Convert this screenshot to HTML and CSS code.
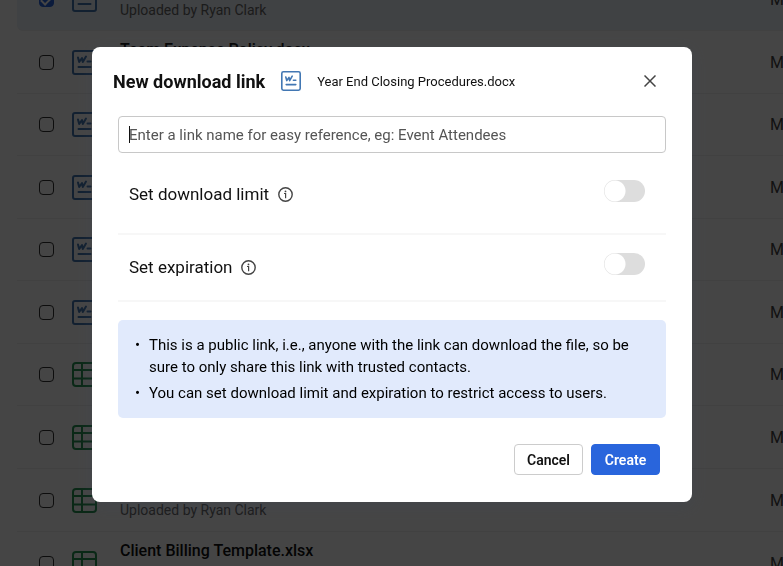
FILE: index.html
```html
<!DOCTYPE html>
<html lang="en">
<head>
    <meta charset="UTF-8">
    <meta name="viewport" content="width=device-width, initial-scale=1.0">
    <title>New download link</title>
    <link rel="stylesheet" href="styles.css">
</head>
<body>
    <svg width="0" height="0" class="sprite" aria-hidden="true">
        <symbol id="icon-doc" viewBox="0 0 25 25">
            <rect x="1" y="1" width="23" height="23" rx="2" fill="none" stroke="currentColor" stroke-width="2"/>
            <path d="M6 7.500L7.200 12L10 8L10.800 12L14 6.500M15.500 11.500H18.500M6.500 17H18.500" fill="none" stroke="currentColor" stroke-width="2" stroke-linecap="round" stroke-linejoin="round"/>
        </symbol>
        <symbol id="icon-sheet" viewBox="0 0 25 25">
            <rect x="1" y="1" width="23" height="23" rx="3" fill="none" stroke="currentColor" stroke-width="2"/>
            <path d="M1 8H24M1 16.500H24M10 1V24" fill="none" stroke="currentColor" stroke-width="2"/>
        </symbol>
        <symbol id="icon-info" viewBox="0 0 15 15">
            <circle cx="7.500" cy="7.500" r="6.700" fill="none" stroke="currentColor" stroke-width="1.400"/>
            <path d="M6 6.500H7.600V11.200" fill="none" stroke="currentColor" stroke-width="1.200"/>
            <circle cx="7.500" cy="4.400" r="0.900" fill="currentColor"/>
        </symbol>
    </svg>

    <main class="files">
        <div class="file selected">
            <input type="checkbox" aria-label="Select file" checked>
            <svg class="file-icon doc"><use href="#icon-doc"/></svg>
            <div class="file-text">
                <div class="file-name">Year End Closing Procedures.docx</div>
                <div class="file-meta">Uploaded by Ryan Clark</div>
            </div>
            <span class="owner">Me</span>
        </div>
        <div class="file">
            <input type="checkbox" aria-label="Select file">
            <svg class="file-icon doc"><use href="#icon-doc"/></svg>
            <div class="file-text">
                <div class="file-name">Team Expense Policy.docx</div>
            </div>
            <span class="owner">Me</span>
        </div>
        <div class="file">
            <input type="checkbox" aria-label="Select file">
            <svg class="file-icon doc"><use href="#icon-doc"/></svg>
            <div class="file-text"></div>
            <span class="owner">Me</span>
        </div>
        <div class="file">
            <input type="checkbox" aria-label="Select file">
            <svg class="file-icon doc"><use href="#icon-doc"/></svg>
            <div class="file-text"></div>
            <span class="owner">Me</span>
        </div>
        <div class="file">
            <input type="checkbox" aria-label="Select file">
            <svg class="file-icon doc"><use href="#icon-doc"/></svg>
            <div class="file-text"></div>
            <span class="owner">Me</span>
        </div>
        <div class="file">
            <input type="checkbox" aria-label="Select file">
            <svg class="file-icon doc"><use href="#icon-doc"/></svg>
            <div class="file-text"></div>
            <span class="owner">Me</span>
        </div>
        <div class="file">
            <input type="checkbox" aria-label="Select file">
            <svg class="file-icon sheet"><use href="#icon-sheet"/></svg>
            <div class="file-text"></div>
            <span class="owner">Me</span>
        </div>
        <div class="file">
            <input type="checkbox" aria-label="Select file">
            <svg class="file-icon sheet"><use href="#icon-sheet"/></svg>
            <div class="file-text"></div>
            <span class="owner">Me</span>
        </div>
        <div class="file">
            <input type="checkbox" aria-label="Select file">
            <svg class="file-icon sheet"><use href="#icon-sheet"/></svg>
            <div class="file-text">
                <div class="file-name">&nbsp;</div>
                <div class="file-meta">Uploaded by Ryan Clark</div>
            </div>
            <span class="owner">Me</span>
        </div>
        <div class="file">
            <input type="checkbox" aria-label="Select file">
            <svg class="file-icon sheet"><use href="#icon-sheet"/></svg>
            <div class="file-text">
                <div class="file-name">Client Billing Template.xlsx</div>
            </div>
            <span class="owner">Me</span>
        </div>
    </main>

    <div class="overlay">
        <form class="dialog" role="dialog" aria-labelledby="dialogTitle">
            <header class="dialog-header">
                <h1 id="dialogTitle">New download link</h1>
                <svg class="header-icon"><use href="#icon-doc"/></svg>
                <span class="header-file">Year End Closing Procedures.docx</span>
                <button type="button" class="close" aria-label="Close">
                    <svg viewBox="0 0 12 12"><path d="M0.500 0.500L11.500 11.500M11.500 0.500L0.500 11.500" fill="none" stroke="currentColor" stroke-width="1.500"/></svg>
                </button>
            </header>

            <div class="dialog-body">
                <div class="field">
                    <input type="text" class="link-name" aria-label="Link name" placeholder="Enter a link name for easy reference, eg: Event Attendees" autofocus>
                    <span class="caret"></span>
                </div>

                <div class="option limit">
                    <label for="limit">Set download limit</label>
                    <svg class="info"><use href="#icon-info"/></svg>
                    <input type="checkbox" class="switch" id="limit">
                </div>
                <div class="option">
                    <label for="expiration">Set expiration</label>
                    <svg class="info"><use href="#icon-info"/></svg>
                    <input type="checkbox" class="switch" id="expiration">
                </div>

                <ul class="note">
                    <li>This is a public link, i.e., anyone with the link can download the file, so be sure to only share this link with trusted contacts.</li>
                    <li>You can set download limit and expiration to restrict access to users.</li>
                </ul>
            </div>

            <footer class="dialog-footer">
                <button type="button" class="btn">Cancel</button>
                <button type="submit" class="btn primary">Create</button>
            </footer>
        </form>
    </div>
</body>
</html>
```
FILE: styles.css
```css
* {
    box-sizing: border-box;
}

body {
    margin: 0;
    height: 100vh;
    overflow: hidden;
    font-family: Roboto, "Liberation Sans", sans-serif;
    font-size: 14px;
    color: #111;
    background-color: #fff;
}

button,
input {
    font-family: inherit;
}

.sprite {
    position: absolute;
}

/* file list, scrolled part of the way down */
.files {
    margin: -31px 0 0 17px;
}

.file {
    display: flex;
    align-items: center;
    height: 63px;
    padding-left: 22px;
    border-bottom: 1px solid #eee;
}

.file:nth-child(odd) {
    height: 62px;
}

.file:nth-child(9) {
    height: 63px;
}

.file.selected {
    background-color: #edf2fa;
    border-radius: 6px 0 0 6px;
}

.file input {
    flex: none;
    appearance: none;
    width: 15px;
    height: 15px;
    margin: 0 18px 0 0;
    border: 1px solid #333;
    border-radius: 4px;
}

.file input:checked {
    border-color: #2965dc;
    background-color: #2965dc;
}

.file input:checked::after {
    content: "";
    display: block;
    width: 5px;
    height: 9px;
    margin: 1px auto 0;
    border: solid #fff;
    border-width: 0 2px 2px 0;
    transform: rotate(45deg);
}

.file-icon {
    flex: none;
    width: 25px;
    height: 25px;
}

.doc {
    color: #4277b3;
}

.sheet {
    color: #269454;
}

.file-text {
    flex: 1;
    align-self: flex-start;
    padding: 8px 0 0 23px;
}

.file-name {
    font-size: 16px;
    line-height: 22px;
    font-weight: 500;
}

.file-meta {
    line-height: 22px;
    color: #666;
}

.owner {
    flex: none;
    width: 13px;
    font-size: 16px;
    color: #444;
}

.overlay {
    position: fixed;
    inset: 0;
    display: flex;
    justify-content: center;
    align-items: flex-start;
    padding: 47px 91px 0 92px;
    background-color: rgba(0, 0, 0, 0.73);
}

.dialog {
    width: 100%;
    max-width: 600px;
    padding: 20px 26px 27px;
    border-radius: 8px;
    background-color: #fff;
    box-shadow: 0 4px 16px rgba(60, 70, 85, 0.3);
}

.dialog-header {
    display: flex;
    align-items: center;
    height: 28px;
    margin: 0 10px 21px -5px;
}

.dialog-header h1 {
    margin: 0 16px 0 0;
    font-size: 18px;
    font-weight: 700;
}

.header-icon {
    width: 20px;
    height: 20px;
    margin-right: 16px;
    color: #4277b3;
}

.header-file {
    font-size: 13px;
}

.close {
    display: flex;
    margin-left: auto;
    padding: 0;
    border: none;
    background: none;
    color: #444;
    cursor: pointer;
}

.close svg {
    width: 12px;
    height: 12px;
}

.field {
    position: relative;
}

.link-name {
    display: block;
    width: 100%;
    height: 37px;
    padding: 0 10px;
    border: 1px solid #c8c8c8;
    border-radius: 4px;
    outline: none;
    font-size: 15px;
    color: #111;
    caret-color: transparent;
}

.link-name::placeholder {
    color: #555;
    opacity: 1;
}

.caret {
    position: absolute;
    left: 11px;
    top: 10px;
    width: 1px;
    height: 17px;
    background-color: #111;
}

.option {
    display: flex;
    align-items: center;
    padding: 18px 21px 19px 11px;
    border-bottom: 2px solid #f7f7f7;
}

.option.limit {
    padding: 27px 21px 25px 11px;
}

.option label {
    font-size: 17px;
    line-height: 24px;
}

.info {
    width: 15px;
    height: 15px;
    margin-left: 9px;
    color: #444;
}

.switch {
    appearance: none;
    width: 41px;
    height: 22px;
    margin: 0 0 6px auto;
    border-radius: 11px;
    background: radial-gradient(circle at 11px 11px, #fff 10px, transparent 11px) #ddd;
    cursor: pointer;
}

.note {
    margin: 18px 0 26px;
    padding: 14px 30px 14px 31px;
    border-radius: 5px;
    background-color: #e1eafc;
    color: #000;
    font-size: 15px;
    line-height: 22px;
}

.note li {
    list-style: none;
}

.note li::before {
    content: "•";
    float: left;
    width: 14px;
    margin-left: -14px;
}

.note li + li {
    margin-top: 4px;
}

.dialog-footer {
    display: flex;
    justify-content: flex-end;
    gap: 8px;
    padding-right: 6px;
}

.btn {
    height: 31px;
    padding: 0 12px;
    min-width: 69px;
    border: 1px solid #ccc;
    border-radius: 4px;
    background-color: #fff;
    color: #111;
    font-size: 14px;
    font-weight: 600;
    cursor: pointer;
}

.btn.primary {
    border-color: #2965dc;
    background-color: #2965dc;
    color: #fff;
}
```
